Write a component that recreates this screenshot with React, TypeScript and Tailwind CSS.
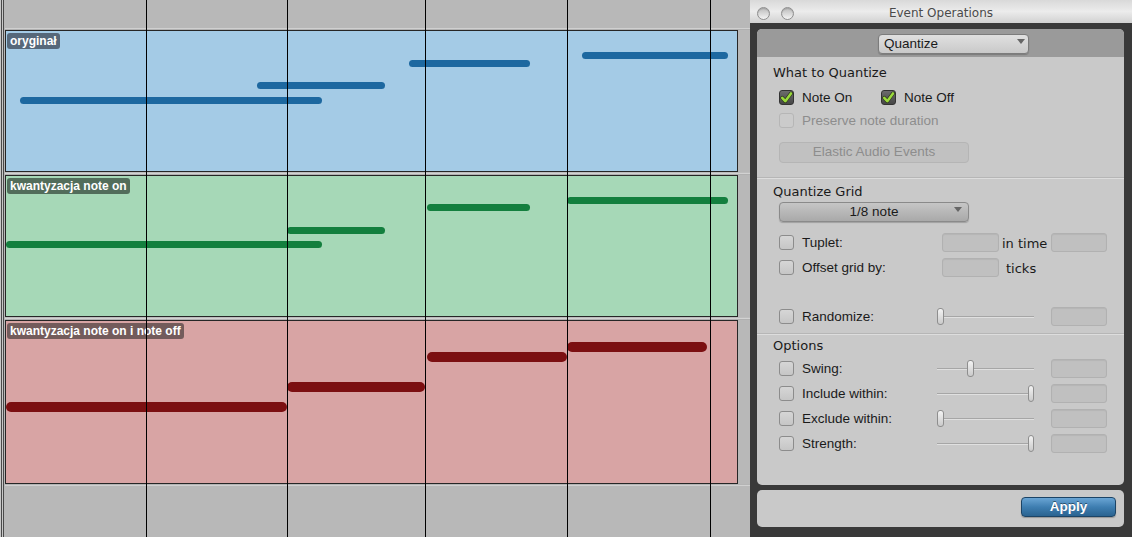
import React from "react";

type Note = [number, number, number];

function Notes({ notes, h, color }: { notes: Note[]; h: number; color: string }) {
  return (
    <>
      {notes.map(([l, t, w], i) => (
        <div
          key={i}
          className={`absolute rounded-full ${color}`}
          style={{ left: l, top: t, width: w, height: h }}
        />
      ))}
    </>
  );
}

function Track({
  label,
  bg,
  labelBg,
  height,
  notes,
  noteH,
  noteColor,
}: {
  label: string;
  bg: string;
  labelBg: string;
  height: string;
  notes: Note[];
  noteH: number;
  noteColor: string;
}) {
  return (
    <div className={`relative w-[733px] ${height} shrink-0 border border-[#262626] ${bg} pl-[1px] pt-[2px] flex items-start`}>
      <div className={`h-[16px] px-[3px] rounded-[3px] ${labelBg} text-white text-[12px] font-bold leading-[16px] whitespace-nowrap`}>
        {label}
      </div>
      <Notes notes={notes} h={noteH} color={noteColor} />
    </div>
  );
}

function Sep() {
  return (
    <div className="h-[3px] shrink-0 flex flex-col">
      <div className="h-[1px] bg-[#bdbdbd]" />
      <div className="h-[1px] bg-[#d2d2d2]" />
      <div className="h-[1px] bg-[#b0b0b0]" />
    </div>
  );
}

function Daw() {
  return (
    <div className="relative w-[750px] h-full flex shrink-0 bg-[#b8b8b8]">
      <div className="flex h-full shrink-0">
        <div className="w-[1px] bg-[#c8c8c8]" />
        <div className="w-[1px] bg-[#4a4a4a]" />
        <div className="w-[1px] bg-[#c8c8c8]" />
        <div className="w-[1px] bg-[#4a4a4a]" />
        <div className="w-[1px] bg-[#b8b8b8]" />
      </div>
      <div className="flex-1 flex flex-col">
        <div className="h-[28px] shrink-0" />
        <div className="h-[1px] shrink-0 bg-[#d0d0d0]" />
        <div className="h-[1px] shrink-0 bg-[#b0b0b0]" />
        <Track
          label="oryginał"
          bg="bg-[#a4cbe6]"
          labelBg="bg-[#56687a]"
          height="h-[142px]"
          noteH={7}
          noteColor="bg-[#1d68a0]"
          notes={[
            [14, 66, 302],
            [251, 51, 128],
            [403, 29, 121],
            [576, 21, 146],
          ]}
        />
        <Sep />
        <Track
          label="kwantyzacja note on"
          bg="bg-[#a6d8b7]"
          labelBg="bg-[#526d5b]"
          height="h-[142px]"
          noteH={7}
          noteColor="bg-[#137f3e]"
          notes={[
            [0, 65, 316],
            [281, 51, 98],
            [421, 28, 103],
            [561, 21, 161],
          ]}
        />
        <Sep />
        <Track
          label="kwantyzacja note on i note off"
          bg="bg-[#d8a4a4]"
          labelBg="bg-[#735b5b]"
          height="h-[164px]"
          noteH={10}
          noteColor="bg-[#7b0f11]"
          notes={[
            [0, 81, 281],
            [281, 61, 138],
            [421, 31, 140],
            [561, 21, 140],
          ]}
        />
        <div className="h-[1px] shrink-0 bg-[#b4b4b4]" />
        <div className="h-[1px] shrink-0 bg-[#d0d0d0]" />
        <div className="flex-1" />
      </div>
      <div className="absolute top-0 bottom-0 left-[146px] w-[1px] bg-black" />
      <div className="absolute top-0 bottom-0 left-[287px] w-[1px] bg-black" />
      <div className="absolute top-0 bottom-0 left-[425px] w-[1px] bg-black" />
      <div className="absolute top-0 bottom-0 left-[567px] w-[1px] bg-black" />
      <div className="absolute top-0 bottom-0 left-[710px] w-[1px] bg-black" />
    </div>
  );
}

function Light() {
  return (
    <div className="w-[13px] h-[13px] rounded-full border border-[#8e8e8e] bg-linear-to-b from-[#bcbcbc] to-[#f4f4f4] shadow-[inset_0_1px_1px_rgba(0,0,0,0.15)]" />
  );
}

function Check({ checked, disabled }: { checked?: boolean; disabled?: boolean }) {
  if (checked) {
    return (
      <div className="w-[15px] h-[15px] shrink-0 rounded-[3px] border border-[#333333] bg-linear-to-b from-[#6c6c6c] to-[#464646] flex items-center justify-center">
        <svg width="13" height="13" viewBox="0 0 13 13">
          <path
            d="M2.2 6.8 L5.3 10.2 L11 2.4"
            stroke="#2e3a1a"
            strokeWidth="3.8"
            fill="none"
            strokeLinecap="round"
            strokeLinejoin="round"
          />
          <path
            d="M2.2 6.8 L5.3 10.2 L11 2.4"
            stroke="#9ad93c"
            strokeWidth="2.5"
            fill="none"
            strokeLinecap="round"
            strokeLinejoin="round"
          />
        </svg>
      </div>
    );
  }
  if (disabled) {
    return <div className="w-[15px] h-[15px] shrink-0 rounded-[3px] border border-[#b6b6b6] bg-[#cbcbcb]" />;
  }
  return (
    <div className="w-[15px] h-[15px] shrink-0 rounded-[3px] border border-[#8c8c8c] bg-linear-to-b from-[#d6d6d6] to-[#c6c6c6]" />
  );
}

function Box({ w }: { w: string }) {
  return (
    <div className={`${w} h-[19px] shrink-0 rounded-[3px] border border-[#b1b1b1] bg-[#c0c0c0] shadow-[inset_0_1px_1px_rgba(0,0,0,0.06)]`} />
  );
}

function Slider({ pos }: { pos: string }) {
  return (
    <div className="relative w-[97px] h-[19px] shrink-0 flex items-center">
      <div className="absolute left-0 right-0 top-[9px] h-[1px] bg-[#a6a6a6]" />
      <div className="absolute left-0 right-0 top-[10px] h-[1px] bg-[#e0e0e0]" />
      <div
        className={`relative w-[7px] h-[17px] rounded-[3px] border border-[#8e8e8e] bg-linear-to-b from-[#f4f4f4] to-[#cacaca] ${pos}`}
      />
    </div>
  );
}

function Arrow({ cls }: { cls: string }) {
  return (
    <svg width="8" height="5" viewBox="0 0 8 5" className={cls}>
      <path d="M0 0 H8 L4 5 Z" fill="#666666" />
    </svg>
  );
}

function SliderRow({ label, pos, mt }: { label: string; pos: string; mt: string }) {
  return (
    <div className={`${mt} h-[19px] flex items-center pl-[6px]`}>
      <Check />
      <span className="ml-[8px] w-[135px] leading-[19px]">{label}</span>
      <Slider pos={pos} />
      <div className="ml-[17px]">
        <Box w="w-[56px]" />
      </div>
    </div>
  );
}

function Divider() {
  return (
    <div className="h-[2px] shrink-0 flex flex-col">
      <div className="h-[1px] bg-[#b6b6b6]" />
      <div className="h-[1px] bg-[#dddddd]" />
    </div>
  );
}

function Window() {
  const head = "h-[16px] leading-[16px] text-[13px] text-[#1a1a1a] font-['DejaVu_Sans',sans-serif]";
  return (
    <div className="w-[382px] h-full flex flex-col bg-[#393939] shrink-0">
      <div className="h-[23px] shrink-0 pt-[3px] bg-linear-to-b from-[#d9d9d9] via-[#ececec] to-[#d1d1d1]">
        <div className="h-[20px] grid grid-cols-[60px_1fr_60px] items-center">
          <div className="flex items-center gap-[11px] pl-[7px]">
            <Light />
            <Light />
          </div>
          <div className="text-center text-[12px] text-[#4a4a4a] font-['DejaVu_Sans',sans-serif] leading-[20px]">
            Event Operations
          </div>
          <div />
        </div>
      </div>
      <div className="flex-1 flex flex-col gap-[5px] pl-[7px] pr-[8px] pt-[6px] pb-[10px]">
        <div className="h-[456px] shrink-0 rounded-[5px] bg-[#c9c9c9] overflow-hidden flex flex-col text-[13.5px] text-[#1a1a1a]">
          <div className="h-[28px] shrink-0 bg-[#9a9a9a] pl-[121px] pt-[5px]">
            <div className="w-[151px] h-[20px] rounded-[4px] border border-[#7c7c7c] bg-linear-to-b from-[#e0e0e0] to-[#c9c9c9] shadow-[0_1px_1px_rgba(0,0,0,0.2)] flex items-start justify-between pl-[5px] pr-[3px]">
              <span className="leading-[18px]">Quantize</span>
              <Arrow cls="mt-[4px]" />
            </div>
          </div>

          <div className="h-[120px] shrink-0 pl-[16px] pt-[8px] flex flex-col">
            <div className={head}>What to Quantize</div>
            <div className="mt-[9px] h-[15px] flex items-center pl-[6px]">
              <div className="w-[102px] flex items-center">
                <Check checked />
                <span className="ml-[8px] leading-[15px]">Note On</span>
              </div>
              <Check checked />
              <span className="ml-[8px] leading-[15px]">Note Off</span>
            </div>
            <div className="mt-[8px] h-[15px] flex items-center pl-[6px]">
              <Check disabled />
              <span className="ml-[8px] leading-[15px] text-[#8d8d8d]">Preserve note duration</span>
            </div>
            <div className="mt-[14px] ml-[6px] w-[190px] h-[21px] rounded-[4px] border border-[#b5b5b5] bg-[#c1c1c1] text-[#8d8d8d] flex items-center justify-center">
              Elastic Audio Events
            </div>
          </div>

          <Divider />

          <div className="h-[154px] shrink-0 pl-[16px] flex flex-col">
            <div className={`mt-[5px] ${head}`}>Quantize Grid</div>
            <div className="mt-[2px] ml-[6px] w-[190px] h-[20px] relative rounded-[4px] border border-[#8a8a8a] bg-linear-to-b from-[#c6c6c6] to-[#a9a9a9] shadow-[0_1px_1px_rgba(0,0,0,0.2)] flex items-center justify-center">
              <span className="leading-[18px]">1/8 note</span>
              <Arrow cls="absolute right-[6px] top-[4px]" />
            </div>
            <div className="mt-[11px] h-[19px] flex items-center pl-[6px]">
              <Check />
              <span className="ml-[8px] w-[140px] leading-[19px]">Tuplet:</span>
              <Box w="w-[57px]" />
              <span className={`ml-[3px] w-[49px] ${head} mt-[3px]`}>in time</span>
              <Box w="w-[56px]" />
            </div>
            <div className="mt-[6px] h-[19px] flex items-center pl-[6px]">
              <Check />
              <span className="ml-[8px] w-[140px] leading-[19px]">Offset grid by:</span>
              <Box w="w-[57px]" />
              <span className={`ml-[7px] ${head} mt-[3px]`}>ticks</span>
            </div>
            <SliderRow mt="mt-[30px]" label="Randomize:" pos="ml-[0px]" />
          </div>

          <Divider />

          <div className="flex-1 pl-[16px] flex flex-col">
            <div className={`mt-[3px] ${head}`}>Options</div>
            <SliderRow mt="mt-[5px]" label="Swing:" pos="ml-[30px]" />
            <SliderRow mt="mt-[6px]" label="Include within:" pos="ml-[91px]" />
            <SliderRow mt="mt-[6px]" label="Exclude within:" pos="ml-[0px]" />
            <SliderRow mt="mt-[6px]" label="Strength:" pos="ml-[91px]" />
          </div>
        </div>

        <div className="h-[37px] shrink-0 rounded-[5px] bg-[#c9c9c9] flex justify-end pt-[7px] pr-[8px]">
          <div className="w-[95px] h-[20px] rounded-[4px] border border-[#1c4466] bg-linear-to-b from-[#6aa5d4] via-[#3e7eb1] to-[#2a6390] shadow-[0_1px_1px_rgba(0,0,0,0.25)] flex items-center justify-center text-white font-bold text-[13.5px] [text-shadow:0_-1px_0_rgba(0,0,0,0.45)]">
            Apply
          </div>
        </div>
      </div>
    </div>
  );
}

export default function App() {
  return (
    <div className="w-[1132px] h-[537px] flex overflow-hidden bg-[#b8b8b8] font-['Liberation_Sans',Arial,sans-serif]">
      <Daw />
      <Window />
    </div>
  );
}
